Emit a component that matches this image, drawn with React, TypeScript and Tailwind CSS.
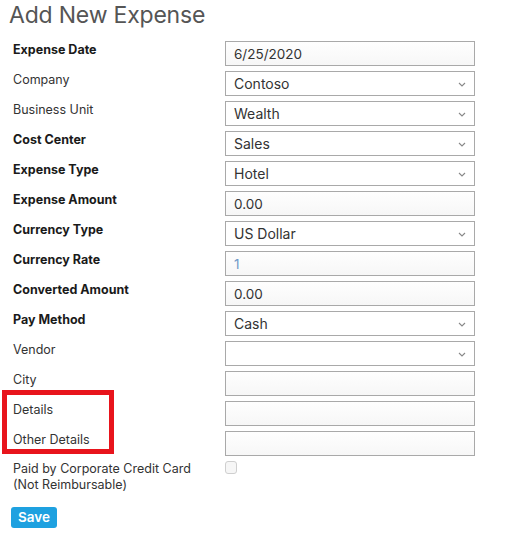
import React from "react";

type Row = {
  label: string;
  bold?: boolean;
  kind: "text" | "select" | "disabled";
  value?: string;
};

const rows: Row[] = [
  { label: "Expense Date", bold: true, kind: "text", value: "6/25/2020" },
  { label: "Company", kind: "select", value: "Contoso" },
  { label: "Business Unit", kind: "select", value: "Wealth" },
  { label: "Cost Center", bold: true, kind: "select", value: "Sales" },
  { label: "Expense Type", bold: true, kind: "select", value: "Hotel" },
  { label: "Expense Amount", bold: true, kind: "text", value: "0.00" },
  { label: "Currency Type", bold: true, kind: "select", value: "US Dollar" },
  { label: "Currency Rate", bold: true, kind: "disabled", value: "1" },
  { label: "Converted Amount", bold: true, kind: "text", value: "0.00" },
  { label: "Pay Method", bold: true, kind: "select", value: "Cash" },
  { label: "Vendor", kind: "select", value: "" },
  { label: "City", kind: "text", value: "" },
  { label: "Details", kind: "text", value: "" },
  { label: "Other Details", kind: "text", value: "" },
];

const Chevron = () => (
  <svg
    width="8"
    height="5"
    viewBox="0 0 8 5"
    className="absolute right-[9px] top-[11px] pointer-events-none"
  >
    <path d="M1 1l3 3 3-3" fill="none" stroke="#888" strokeWidth="1.1" />
  </svg>
);

const Field = ({ row }: { row: Row }) => {
  if (row.kind === "select") {
    return (
      <div className="relative w-[250px] h-[25px]">
        <select
          defaultValue={row.value}
          className="appearance-none w-full h-full border border-[#a9a9a9] bg-white pl-[8px] text-[14px] text-[#333] outline-none"
        >
          <option value={row.value}>{row.value}</option>
        </select>
        <Chevron />
      </div>
    );
  }
  return (
    <input
      readOnly
      value={row.value}
      className={`w-[250px] h-[25px] border border-[#a9a9a9] bg-gradient-to-b from-[#fefefe] to-[#f7f7f7] pl-[8px] text-[13.5px] outline-none ${
        row.kind === "disabled" ? "text-[#6f98c8]" : "text-[#333]"
      }`}
    />
  );
};

export default function App() {
  return (
    <div className="relative w-[520px] h-[536px] bg-white font-['Inter',sans-serif]">
      <h1 className="pl-[9px] pt-[1px] text-[23px] leading-[28px] font-normal text-[#555] tracking-[-0.2px]">
        Add New Expense
      </h1>

      <div className="flex flex-col gap-[5px] mt-[12px]">
        {rows.map((row) => (
          <div key={row.label} className="flex items-start">
            <label
              className={`w-[225px] shrink-0 pl-[13px] text-[12.5px] leading-[16px] pt-[1px] ${
                row.bold ? "font-bold text-[#1a1a1a]" : "font-normal text-[#333]"
              }`}
            >
              {row.label}
            </label>
            <Field row={row} />
          </div>
        ))}

        <div className="flex items-start">
          <label className="w-[225px] shrink-0 pl-[13px] text-[12.5px] leading-[16px] text-[#333]">
            Paid by Corporate Credit Card
            <br />
            (Not Reimbursable)
          </label>
          <span className="w-[12px] h-[13px] rounded-[3px] border border-[#cfcfcf] bg-[#f6f6f6]" />
        </div>
      </div>

      <button className="ml-[11px] mt-[14px] h-[21px] px-[7px] rounded-[3px] bg-[#1ea1e0] text-white text-[13.5px] font-semibold leading-[21px]">
        Save
      </button>

      {/* annotation box */}
      <div className="absolute left-[2px] top-[390px] w-[112px] h-[64px] border-[5px] border-[#e8141c]" />
    </div>
  );
}
